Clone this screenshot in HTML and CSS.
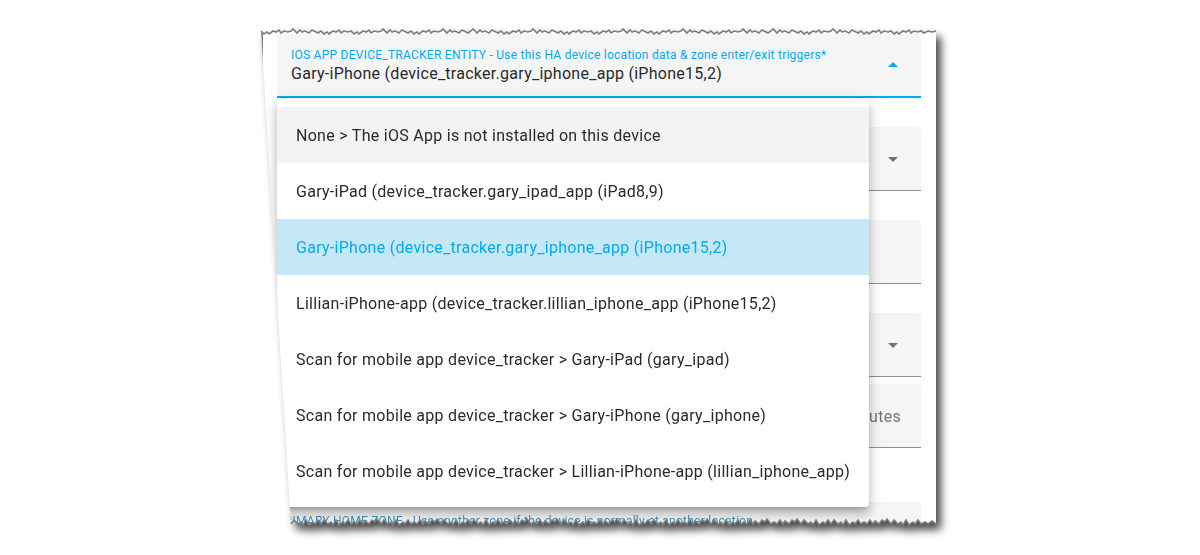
FILE: index.html
```html
<!DOCTYPE html>
<html>
<head>
<meta charset="utf-8">
<link rel="stylesheet" href="styles.css">
</head>
<body>
<div class="stage">
  <div class="shot">
    <div class="paper">
      <div class="field focused mb29">
        <div class="f-label">IOS APP DEVICE_TRACKER ENTITY - Use this HA device location data &amp; zone enter/exit triggers*</div>
        <div class="f-value">Gary-iPhone (device_tracker.gary_iphone_app (iPhone15,2)</div>
        <span class="arrow up"></span>
        <div class="menu">
          <div class="item hover">None &gt; The iOS App is not installed on this device</div>
          <div class="item">Gary-iPad (device_tracker.gary_ipad_app (iPad8,9)</div>
          <div class="item selected">Gary-iPhone (device_tracker.gary_iphone_app (iPhone15,2)</div>
          <div class="item">Lillian-iPhone-app (device_tracker.lillian_iphone_app (iPhone15,2)</div>
          <div class="item">Scan for mobile app device_tracker &gt; Gary-iPad (gary_ipad)</div>
          <div class="item">Scan for mobile app device_tracker &gt; Gary-iPhone (gary_iphone)</div>
          <div class="item">Scan for mobile app device_tracker &gt; Lillian-iPhone-app (lillian_iphone_app)</div>
        </div>
      </div>
      <div class="field mb29"><span class="arrow down"></span></div>
      <div class="field mb29"></div>
      <div class="field mb7"><span class="arrow down"></span></div>
      <div class="field mb54"><span class="suffix">minutes</span></div>
      <div class="field plain">
        <div class="f-label dim">PRIMARY HOME ZONE - Use another zone if the device is normally at another location</div>
      </div>
    </div>
    <svg class="edges" width="675" height="506" viewBox="0 0 675 506">
      <path d="M0 7 l3 3 l3 -2 l2 2 l4 -3 l3 1 l3 -2 l2 3 l3 -2 l4 1 l3 -1 l2 -2 l4 4 l3 -3 l2 2 l3 -1 l4 2 l3 -3 l2 1 l4 2 l3 -2 l3 3 l3 -2 l2 2 l4 -3 l3 1 l3 -2 l2 3 l3 -2 l4 1 l3 -1 l3 3 l3 -2 l2 2 l4 -3 l3 1 l3 -2 l2 3 l3 -2 l4 1 l3 -1 l2 -2 l4 4 l3 -3 l2 2 l3 -1 l4 2 l3 -3 l2 1 l4 2 l3 -2 l3 3 l3 -2 l2 2 l4 -3 l3 1 l3 -2 l2 3 l3 -2 l4 1 l3 -1 l2 -2 l4 4 l3 -3 l2 2 l3 -1 l4 2 l3 -3 l2 1 l4 2 l3 -2 l2 -2 l4 4 l3 -3 l2 2 l3 -1 l4 2 l3 -3 l2 1 l4 2 l3 -2 l3 3 l3 -2 l2 2 l4 -3 l3 1 l3 -2 l2 3 l3 -2 l4 1 l3 -1 l2 -2 l4 4 l3 -3 l2 2 l3 -1 l4 2 l3 -3 l2 1 l4 2 l3 -2 l3 3 l3 -2 l2 2 l4 -3 l3 1 l3 -2 l2 3 l3 -2 l4 1 l3 -1 l3 3 l3 -2 l2 2 l4 -3 l3 1 l3 -2 l2 3 l3 -2 l4 1 l3 -1 l2 -2 l4 4 l3 -3 l2 2 l3 -1 l4 2 l3 -3 l2 1 l4 2 l3 -2 l3 3 l3 -2 l2 2 l4 -3 l3 1 l3 -2 l2 3 l3 -2 l4 1 l3 -1 l2 -2 l4 4 l3 -3 l2 2 l3 -1 l4 2 l3 -3 l2 1 l4 2 l3 -2 l3 3 l3 -2 l2 2 l4 -3 l3 1 l3 -2 l2 3 l3 -2 l4 1 l3 -1 l2 -2 l4 4 l3 -3 l2 2 l3 -1 l4 2 l3 -3 l2 1 l4 2 l3 -2 l2 -2 l4 4 l3 -3 l2 2 l3 -1 l4 2 l3 -3 l2 1 l4 2 l3 -2 l3 3 l3 -2 l2 2 l4 -3 l3 1 l3 -2 l2 3 l3 -2 l4 1 l3 -1 l2 -2 l4 4 l3 -3 l2 2 l3 -1 l4 2 l3 -3 l2 1 l4 2 l3 -2 l3 3 l3 -2 l2 2 l4 -3 l3 1 l3 -2 l2 3 l3 -2 l4 1 l3 -1 l3 3 l3 -2 l2 2 l4 -3 l3 1 l3 -2 l2 3 l3 -2 l4 1 l3 -1 l3 2 l4 -2 l4 1 l4 -1"/>
      <path d="M675 500 l-4 -3 l-4 3 l-3 -2 l-4 2 l-3 -4 l-3 4 l-2 -2 l-4 3 l-3 -5 l-3 5 l-2 -3 l-3 2 l-4 -4 l-3 4 l-4 -5 l-2 3 l-3 -2 l-3 4 l-4 -3 l-2 3 l-3 -4 l-3 4 l-3 -2 l-3 2 l-3 -4 l-3 4 l-2 -2 l-4 3 l-3 -5 l-3 5 l-2 -3 l-3 2 l-4 -4 l-3 4 l-3 -4 l-3 4 l-2 -2 l-4 3 l-3 -5 l-3 5 l-2 -3 l-3 2 l-4 -4 l-3 4 l-4 -5 l-2 3 l-3 -2 l-3 4 l-4 -3 l-2 3 l-3 -4 l-3 4 l-3 -2 l-3 2 l-4 -5 l-2 3 l-3 -2 l-3 4 l-4 -3 l-2 3 l-3 -4 l-3 4 l-3 -2 l-3 2 l-3 -4 l-3 4 l-2 -2 l-4 3 l-3 -5 l-3 5 l-2 -3 l-3 2 l-4 -4 l-3 4 l-4 -5 l-2 3 l-3 -2 l-3 4 l-4 -3 l-2 3 l-3 -4 l-3 4 l-3 -2 l-3 2 l-3 -4 l-3 4 l-2 -2 l-4 3 l-3 -5 l-3 5 l-2 -3 l-3 2 l-4 -4 l-3 4 l-3 -4 l-3 4 l-2 -2 l-4 3 l-3 -5 l-3 5 l-2 -3 l-3 2 l-4 -4 l-3 4 l-4 -5 l-2 3 l-3 -2 l-3 4 l-4 -3 l-2 3 l-3 -4 l-3 4 l-3 -2 l-3 2 l-3 -4 l-3 4 l-2 -2 l-4 3 l-3 -5 l-3 5 l-2 -3 l-3 2 l-4 -4 l-3 4 l-4 -5 l-2 3 l-3 -2 l-3 4 l-4 -3 l-2 3 l-3 -4 l-3 4 l-3 -2 l-3 2 l-4 -5 l-2 3 l-3 -2 l-3 4 l-4 -3 l-2 3 l-3 -4 l-3 4 l-3 -2 l-3 2 l-3 -4 l-3 4 l-2 -2 l-4 3 l-3 -5 l-3 5 l-2 -3 l-3 2 l-4 -4 l-3 4 l-3 -4 l-3 4 l-2 -2 l-4 3 l-3 -5 l-3 5 l-2 -3 l-3 2 l-4 -4 l-3 4 l-4 -5 l-2 3 l-3 -2 l-3 4 l-4 -3 l-2 3 l-3 -4 l-3 4 l-3 -2 l-3 2 l-3 -4 l-3 4 l-2 -2 l-4 3 l-3 -5 l-3 5 l-2 -3 l-3 2 l-4 -4 l-3 4 l-4 -5 l-2 3 l-3 -2 l-3 4 l-4 -3 l-2 3 l-3 -4 l-3 4 l-3 -2 l-3 2 l-3 -4 l-3 4 l-2 -2 l-4 3 l-3 -5 l-3 5 l-2 -3 l-3 2 l-4 -4 l-3 4 l-3 -4 l-3 4 l-2 -2 l-4 3 l-3 -5 l-3 5 l-2 -3 l-3 2 l-4 -4 l-3 4"/>
    </svg>
  </div>
</div>
</body>
</html>
```

FILE: styles.css
```css
html, body {
  margin: 0;
  padding: 0;
  background: #ffffff;
}

body {
  width: 1200px;
  height: 555px;
  overflow: hidden;
  font-family: Roboto, "Noto Sans", sans-serif;
}

.stage {
  padding: 24px 0 0 261px;
}

.shot {
  position: relative;
  width: 675px;
  height: 506px;
  filter: drop-shadow(5px 6px 4px rgba(0, 0, 0, 0.72));
}

.paper {
  box-sizing: border-box;
  width: 675px;
  height: 506px;
  background: #ffffff;
  border-left: 2px solid #858585;
  padding: 10px 15px 0 14px;
  display: flex;
  flex-direction: column;
  clip-path: path('M0 7 l3 3 l3 -2 l2 2 l4 -3 l3 1 l3 -2 l2 3 l3 -2 l4 1 l3 -1 l2 -2 l4 4 l3 -3 l2 2 l3 -1 l4 2 l3 -3 l2 1 l4 2 l3 -2 l3 3 l3 -2 l2 2 l4 -3 l3 1 l3 -2 l2 3 l3 -2 l4 1 l3 -1 l3 3 l3 -2 l2 2 l4 -3 l3 1 l3 -2 l2 3 l3 -2 l4 1 l3 -1 l2 -2 l4 4 l3 -3 l2 2 l3 -1 l4 2 l3 -3 l2 1 l4 2 l3 -2 l3 3 l3 -2 l2 2 l4 -3 l3 1 l3 -2 l2 3 l3 -2 l4 1 l3 -1 l2 -2 l4 4 l3 -3 l2 2 l3 -1 l4 2 l3 -3 l2 1 l4 2 l3 -2 l2 -2 l4 4 l3 -3 l2 2 l3 -1 l4 2 l3 -3 l2 1 l4 2 l3 -2 l3 3 l3 -2 l2 2 l4 -3 l3 1 l3 -2 l2 3 l3 -2 l4 1 l3 -1 l2 -2 l4 4 l3 -3 l2 2 l3 -1 l4 2 l3 -3 l2 1 l4 2 l3 -2 l3 3 l3 -2 l2 2 l4 -3 l3 1 l3 -2 l2 3 l3 -2 l4 1 l3 -1 l3 3 l3 -2 l2 2 l4 -3 l3 1 l3 -2 l2 3 l3 -2 l4 1 l3 -1 l2 -2 l4 4 l3 -3 l2 2 l3 -1 l4 2 l3 -3 l2 1 l4 2 l3 -2 l3 3 l3 -2 l2 2 l4 -3 l3 1 l3 -2 l2 3 l3 -2 l4 1 l3 -1 l2 -2 l4 4 l3 -3 l2 2 l3 -1 l4 2 l3 -3 l2 1 l4 2 l3 -2 l3 3 l3 -2 l2 2 l4 -3 l3 1 l3 -2 l2 3 l3 -2 l4 1 l3 -1 l2 -2 l4 4 l3 -3 l2 2 l3 -1 l4 2 l3 -3 l2 1 l4 2 l3 -2 l2 -2 l4 4 l3 -3 l2 2 l3 -1 l4 2 l3 -3 l2 1 l4 2 l3 -2 l3 3 l3 -2 l2 2 l4 -3 l3 1 l3 -2 l2 3 l3 -2 l4 1 l3 -1 l2 -2 l4 4 l3 -3 l2 2 l3 -1 l4 2 l3 -3 l2 1 l4 2 l3 -2 l3 3 l3 -2 l2 2 l4 -3 l3 1 l3 -2 l2 3 l3 -2 l4 1 l3 -1 l3 3 l3 -2 l2 2 l4 -3 l3 1 l3 -2 l2 3 l3 -2 l4 1 l3 -1 l3 2 l4 -2 l4 1 l4 -1 L675 500 l-4 -3 l-4 3 l-3 -2 l-4 2 l-3 -4 l-3 4 l-2 -2 l-4 3 l-3 -5 l-3 5 l-2 -3 l-3 2 l-4 -4 l-3 4 l-4 -5 l-2 3 l-3 -2 l-3 4 l-4 -3 l-2 3 l-3 -4 l-3 4 l-3 -2 l-3 2 l-3 -4 l-3 4 l-2 -2 l-4 3 l-3 -5 l-3 5 l-2 -3 l-3 2 l-4 -4 l-3 4 l-3 -4 l-3 4 l-2 -2 l-4 3 l-3 -5 l-3 5 l-2 -3 l-3 2 l-4 -4 l-3 4 l-4 -5 l-2 3 l-3 -2 l-3 4 l-4 -3 l-2 3 l-3 -4 l-3 4 l-3 -2 l-3 2 l-4 -5 l-2 3 l-3 -2 l-3 4 l-4 -3 l-2 3 l-3 -4 l-3 4 l-3 -2 l-3 2 l-3 -4 l-3 4 l-2 -2 l-4 3 l-3 -5 l-3 5 l-2 -3 l-3 2 l-4 -4 l-3 4 l-4 -5 l-2 3 l-3 -2 l-3 4 l-4 -3 l-2 3 l-3 -4 l-3 4 l-3 -2 l-3 2 l-3 -4 l-3 4 l-2 -2 l-4 3 l-3 -5 l-3 5 l-2 -3 l-3 2 l-4 -4 l-3 4 l-3 -4 l-3 4 l-2 -2 l-4 3 l-3 -5 l-3 5 l-2 -3 l-3 2 l-4 -4 l-3 4 l-4 -5 l-2 3 l-3 -2 l-3 4 l-4 -3 l-2 3 l-3 -4 l-3 4 l-3 -2 l-3 2 l-3 -4 l-3 4 l-2 -2 l-4 3 l-3 -5 l-3 5 l-2 -3 l-3 2 l-4 -4 l-3 4 l-4 -5 l-2 3 l-3 -2 l-3 4 l-4 -3 l-2 3 l-3 -4 l-3 4 l-3 -2 l-3 2 l-4 -5 l-2 3 l-3 -2 l-3 4 l-4 -3 l-2 3 l-3 -4 l-3 4 l-3 -2 l-3 2 l-3 -4 l-3 4 l-2 -2 l-4 3 l-3 -5 l-3 5 l-2 -3 l-3 2 l-4 -4 l-3 4 l-3 -4 l-3 4 l-2 -2 l-4 3 l-3 -5 l-3 5 l-2 -3 l-3 2 l-4 -4 l-3 4 l-4 -5 l-2 3 l-3 -2 l-3 4 l-4 -3 l-2 3 l-3 -4 l-3 4 l-3 -2 l-3 2 l-3 -4 l-3 4 l-2 -2 l-4 3 l-3 -5 l-3 5 l-2 -3 l-3 2 l-4 -4 l-3 4 l-4 -5 l-2 3 l-3 -2 l-3 4 l-4 -3 l-2 3 l-3 -4 l-3 4 l-3 -2 l-3 2 l-3 -4 l-3 4 l-2 -2 l-4 3 l-3 -5 l-3 5 l-2 -3 l-3 2 l-4 -4 l-3 4 l-3 -4 l-3 4 l-2 -2 l-4 3 l-3 -5 l-3 5 l-2 -3 l-3 2 l-4 -4 l-3 4 Z');
}

.edges {
  position: absolute;
  left: 0;
  top: 0;
  overflow: visible;
  pointer-events: none;
}

.edges path {
  fill: none;
  stroke: #7d7d7d;
  stroke-width: 1.6;
  stroke-linejoin: miter;
}

.field {
  position: relative;
  flex: 0 0 auto;
  box-sizing: border-box;
  height: 64px;
  background: #f5f5f5;
  border-radius: 4px 4px 0 0;
  border-bottom: 1px solid #8f8f8f;
  padding: 0 14px;
}

.field.focused {
  border-bottom: 2px solid #03a9f4;
}

.field.plain {
  border-bottom: none;
  padding: 0;
}

.mb29 { margin-bottom: 29px; }
.mb7 { margin-bottom: 7px; }
.mb54 { margin-bottom: 54px; }

.f-label {
  font-size: 12px;
  line-height: 16px;
  padding-top: 13px;
  color: #03a9f4;
  letter-spacing: 0.25px;
  white-space: nowrap;
}

.f-label.dim {
  color: #3f93c9;
  padding-top: 11px;
}

.f-value {
  font-size: 16px;
  line-height: 20px;
  margin-top: 1px;
  color: #2a2a2a;
  letter-spacing: 0.27px;
  white-space: nowrap;
}

.arrow {
  position: absolute;
  right: 23px;
  top: 50%;
  width: 0;
  height: 0;
  border-left: 5px solid transparent;
  border-right: 5px solid transparent;
}

.arrow.down {
  margin-top: -2px;
  border-top: 5px solid #727272;
}

.arrow.up {
  margin-top: -3px;
  border-bottom: 5px solid #03a9f4;
}

.suffix {
  position: absolute;
  right: 20px;
  top: 23px;
  font-size: 16px;
  line-height: 20px;
  letter-spacing: 0.27px;
  color: #757575;
}

.menu {
  position: absolute;
  z-index: 3;
  left: 0;
  top: calc(100% + 3px);
  width: 592px;
  box-sizing: border-box;
  padding: 8px 0;
  background: #ffffff;
  border-radius: 4px;
  box-shadow: 0 5px 5px -3px rgba(0, 0, 0, 0.2), 0 8px 10px 1px rgba(0, 0, 0, 0.14), 0 3px 14px 2px rgba(0, 0, 0, 0.12);
}

.item {
  height: 56px;
  display: flex;
  align-items: center;
  padding-left: 19px;
  font-size: 16px;
  letter-spacing: 0.28px;
  color: #2a2a2a;
  white-space: nowrap;
}

.item.hover {
  background: #f3f3f3;
}

.item.selected {
  background: #c5e8f9;
  color: #03a9f4;
}
```
